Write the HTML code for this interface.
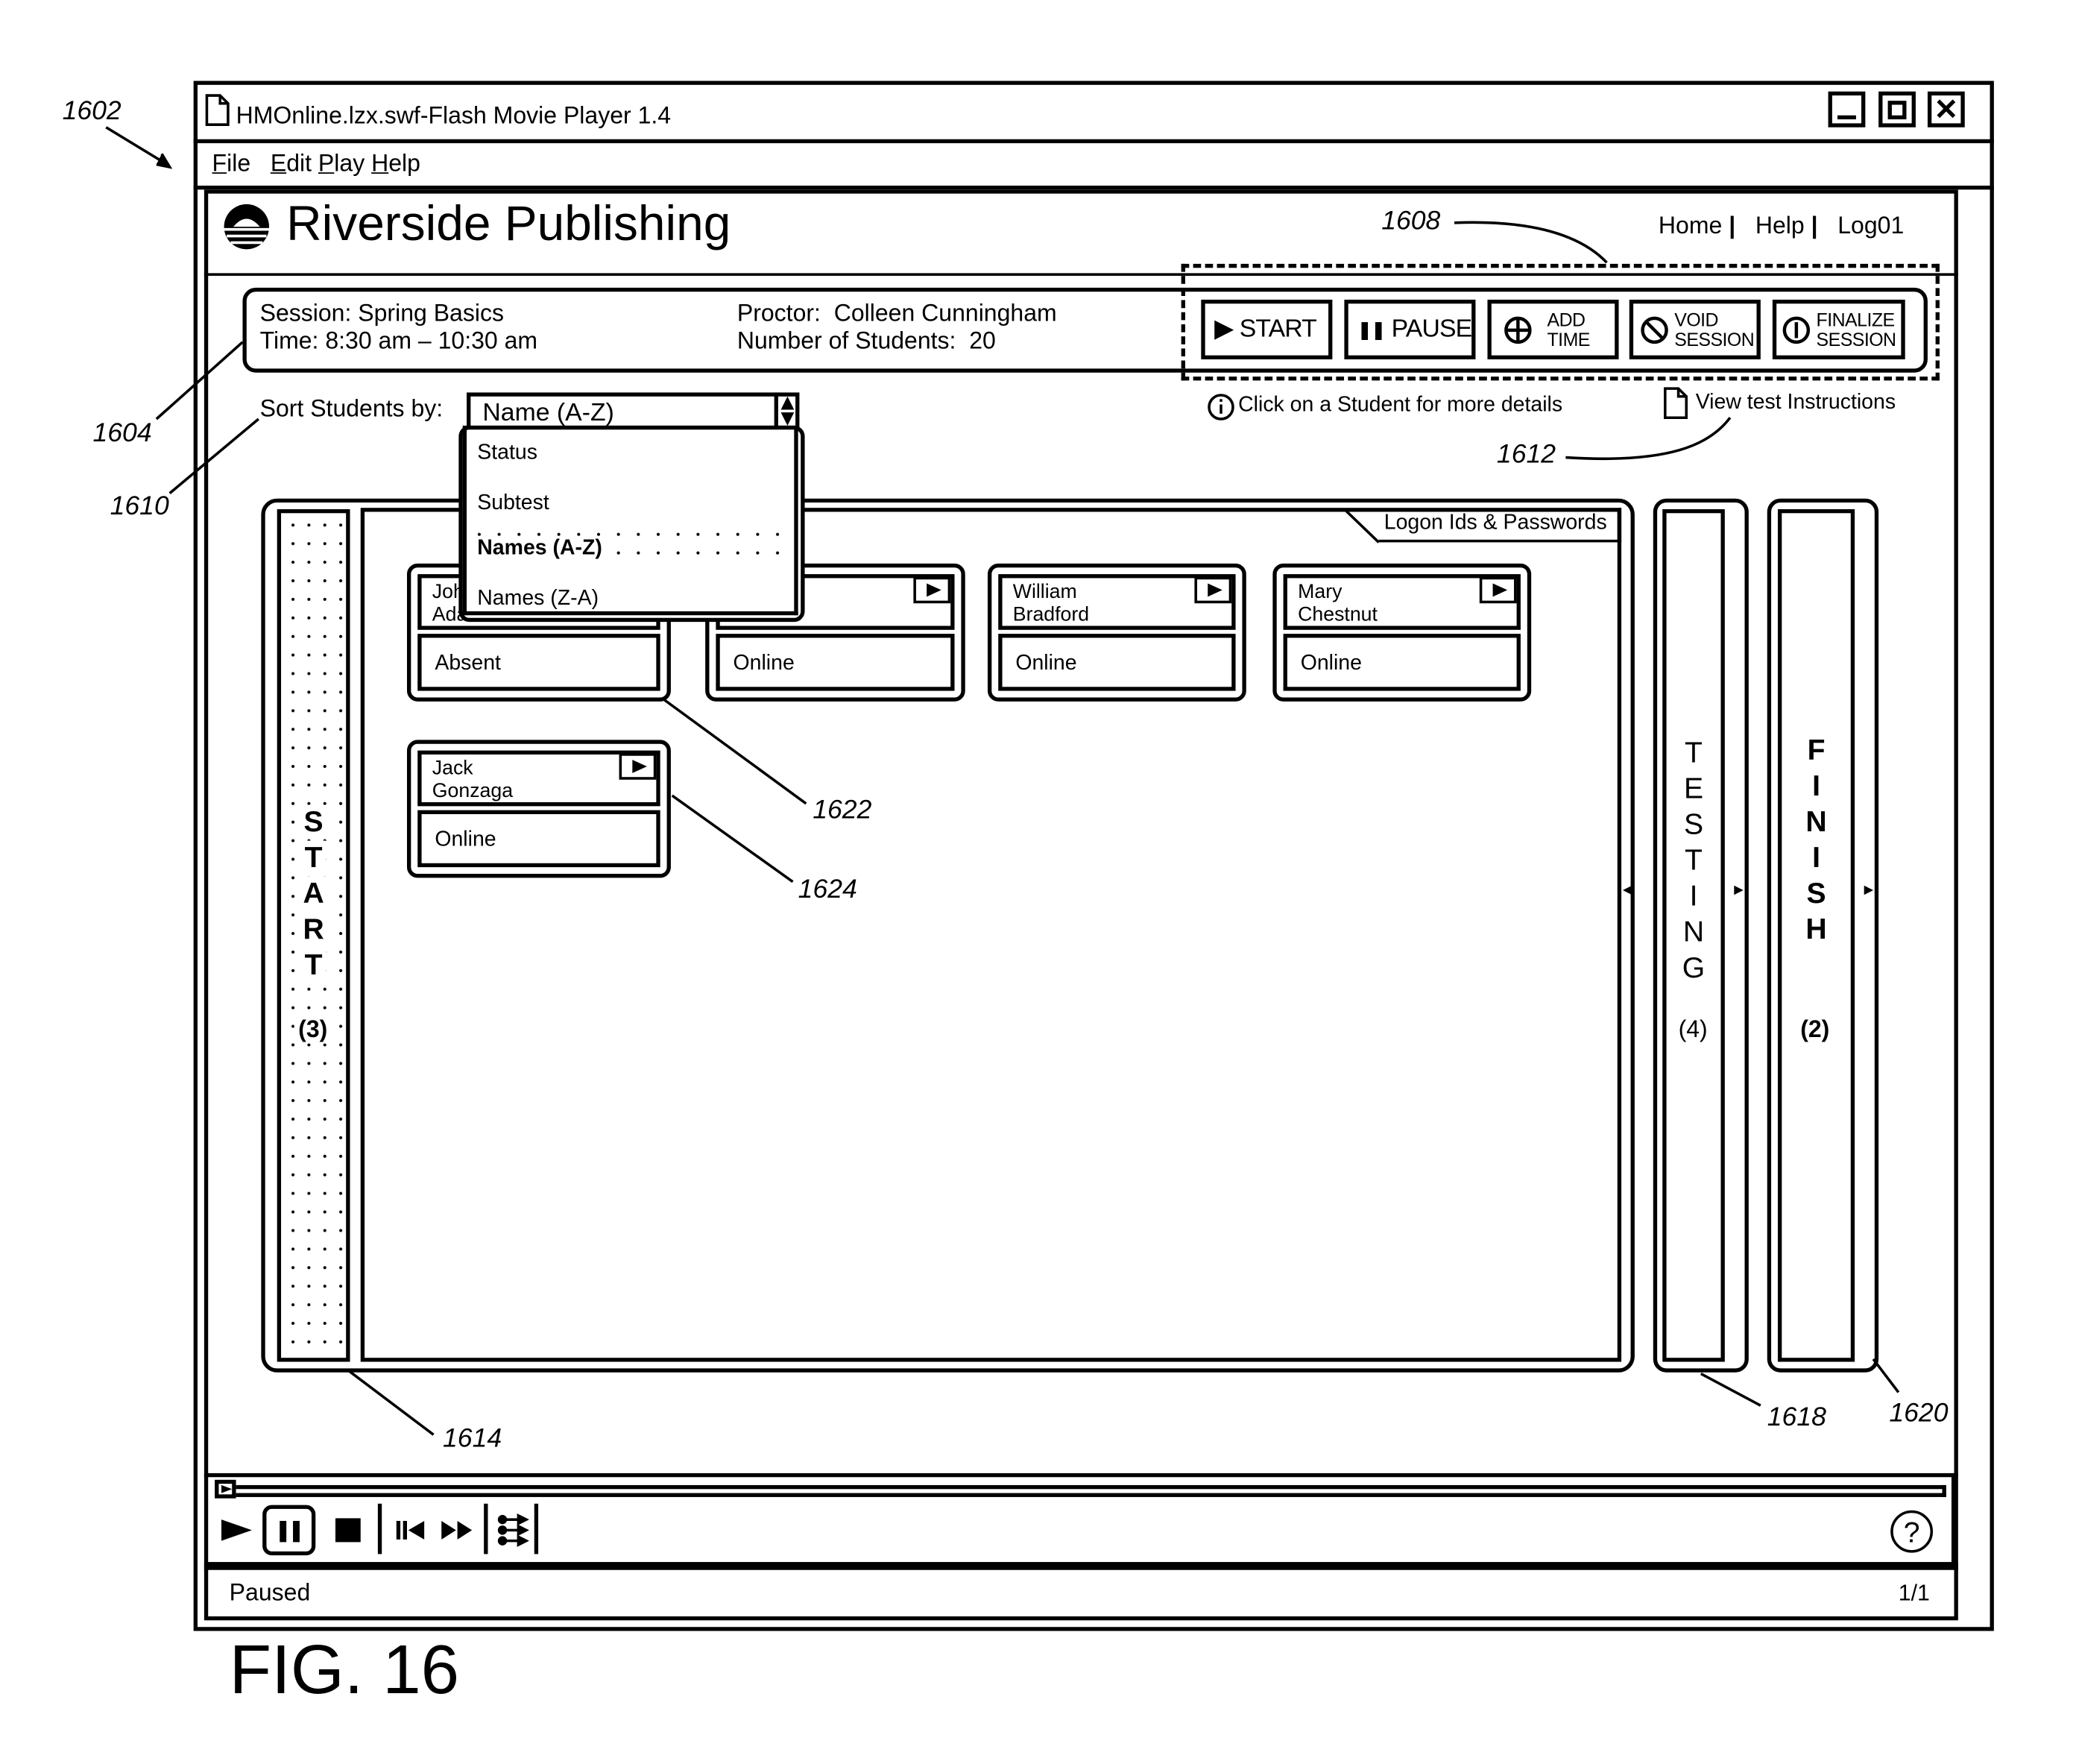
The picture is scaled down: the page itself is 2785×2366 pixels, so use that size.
<!DOCTYPE html>
<html><head><meta charset="utf-8"><style>
*{box-sizing:border-box;margin:0;padding:0}
html,body{width:2785px;height:2366px;background:#fff;overflow:hidden}
#w{position:absolute;left:0;top:0;width:1557px;height:1330px;transform:scale(1.7785);transform-origin:0 0;font-family:"Liberation Sans",Arial,sans-serif;color:#000}
.a{position:absolute}
.b{position:absolute;border:3px solid #000;background:#fff}
.t{position:absolute;white-space:nowrap}
.lbl{position:absolute;font-style:italic;font-size:20px;white-space:nowrap}
.btn{position:absolute;top:226px;height:45px;border:3px solid #000;background:#fff;font-size:19px;display:flex;align-items:center;overflow:hidden}
.btn2{position:absolute;top:226px;height:45px;border:3px solid #000;background:#fff;font-size:14px;line-height:15px;display:flex;align-items:center;overflow:hidden;letter-spacing:-0.3px}
.dots{background-image:radial-gradient(circle,#000 1px,transparent 1.3px);background-size:9px 13px}
.card{position:absolute;width:199px;height:104px;border:3px solid #000;border-radius:8px;background:#fff}
.card .n{position:absolute;left:5px;top:5px;right:5px;height:42px;border:3px solid #000;font-size:15px;line-height:17px;padding:2px 0 0 8px}
.card .s{position:absolute;left:5px;top:50px;right:5px;bottom:5px;border:3px solid #000;font-size:16px;padding:11px 0 0 10px}
.pl{position:absolute;right:8px;top:7px;width:28px;height:20px;border:2px solid #000}
.pl:after{content:"";position:absolute;left:8px;top:3px;border-left:11px solid #000;border-top:5px solid transparent;border-bottom:5px solid transparent}
.vt{position:absolute;text-align:center;font-size:22px;line-height:27px}
.wb{background:#fff;padding:0 3px}
</style></head><body><div id="w">

<!-- outer window -->
<div class="b" style="left:146px;top:61px;width:1358px;height:1169px"></div>
<div class="a" style="left:146px;top:105px;width:1358px;height:3px;background:#000"></div>
<div class="a" style="left:146px;top:140px;width:1358px;height:3px;background:#000"></div>
<svg class="a" style="left:154px;top:70px" width="20" height="26"><path d="M2 2H12L18 8V24H2Z M12 2V8H18" fill="none" stroke="#000" stroke-width="2"/></svg>
<div class="t" style="left:178px;top:77px;font-size:18px">HMOnline.lzx.swf-Flash Movie Player 1.4</div>
<div class="b" style="left:1379px;top:69px;width:28px;height:27px"><div class="a" style="left:4px;bottom:3px;width:14px;height:3px;background:#000"></div></div>
<div class="b" style="left:1417px;top:69px;width:28px;height:27px"><div class="a" style="left:4px;top:4px;width:14px;height:14px;border:3px solid #000"></div></div>
<div class="b" style="left:1454px;top:69px;width:28px;height:27px;font-size:22px;font-weight:bold;line-height:21px;text-align:center">✕</div>
<div class="t" style="left:160px;top:113px;font-size:18px"><u>F</u>ile &nbsp;&nbsp;<u>E</u>dit <u>P</u>lay <u>H</u>elp</div>

<!-- inner app -->
<div class="b" style="left:154px;top:143px;width:1323px;height:1079px"></div>
<div class="a" style="left:154px;top:206px;width:1323px;height:2px;background:#000"></div>
<svg class="a" style="left:166px;top:151px" width="40" height="40"><circle cx="20" cy="20" r="17" fill="#000"/><path d="M3 22H37M5 27H35M8 32H32" stroke="#fff" stroke-width="2"/><path d="M10 20Q20 8 30 20" fill="#fff"/></svg>
<div class="t" style="left:216px;top:148px;font-size:37px">Riverside Publishing</div>
<div class="t" style="left:1251px;top:160px;font-size:18px">Home <b>|</b> &nbsp; Help <b>|</b> &nbsp; Log01</div>

<!-- session box -->
<div class="b" style="left:183px;top:217px;width:1271px;height:64px;border-radius:10px"></div>
<div class="t" style="left:196px;top:226px;font-size:18px;line-height:21px">Session: Spring Basics<br>Time: 8:30 am – 10:30 am</div>
<div class="t" style="left:556px;top:226px;font-size:18px;line-height:21px">Proctor:&nbsp; Colleen Cunningham<br>Number of Students:&nbsp; 20</div>
<div class="a" style="left:891px;top:199px;width:572px;height:88px;border:3px dashed #000"></div>
<div class="btn" style="left:906px;width:99px;padding-left:7px;letter-spacing:-0.5px">▶&nbsp;START</div>
<div class="btn" style="left:1014px;width:99px;padding-left:7px;letter-spacing:-0.5px"><b style="font-size:13px">❚❚</b>&nbsp;PAUSE</div>
<div class="btn2" style="left:1122px;width:99px;padding-left:8px"><svg width="24" height="24" style="margin-right:10px"><circle cx="12" cy="12" r="9" fill="none" stroke="#000" stroke-width="2.5"/><path d="M12 4V20M4 12H20" stroke="#000" stroke-width="2.5"/></svg><span>ADD<br>TIME</span></div>
<div class="btn2" style="left:1229px;width:99px;padding-left:5px"><svg width="22" height="22" style="margin-right:4px"><circle cx="11" cy="11" r="9" fill="none" stroke="#000" stroke-width="2.5"/><path d="M5 5L17 17" stroke="#000" stroke-width="2.5"/></svg><span>VOID<br>SESSION</span></div>
<div class="btn2" style="left:1337px;width:100px;padding-left:4px"><svg width="22" height="22" style="margin-right:4px"><circle cx="11" cy="11" r="9" fill="none" stroke="#000" stroke-width="2.5"/><path d="M11 5V17" stroke="#000" stroke-width="2.5"/></svg><span>FINALIZE<br>SESSION</span></div>

<svg class="a" style="left:910px;top:296px" width="22" height="22"><circle cx="11" cy="11" r="9" fill="none" stroke="#000" stroke-width="2"/><path d="M11 9V16M11 5V7" stroke="#000" stroke-width="2"/></svg>
<div class="t" style="left:934px;top:297px;font-size:16px">Click on a Student for more details</div>
<svg class="a" style="left:1254px;top:291px" width="20" height="26"><path d="M2 2H12L18 8V24H2Z M12 2V8H18" fill="none" stroke="#000" stroke-width="2"/></svg>
<div class="t" style="left:1279px;top:295px;font-size:16px">View test Instructions</div>

<!-- sort -->
<div class="t" style="left:196px;top:298px;font-size:18px">Sort Students by:</div>
<div class="b" style="left:352px;top:296px;width:251px;height:28px;font-size:19px;padding:2px 0 0 9px">Name (A-Z)</div>
<div class="a" style="left:584px;top:296px;width:3px;height:28px;background:#000"></div>
<svg class="a" style="left:587px;top:298px" width="14" height="24"><path d="M7 1L12 11H2Z M2 13H12L7 23Z" fill="#000"/></svg>

<!-- big panel -->
<div class="b" style="left:197px;top:376px;width:1036px;height:659px;border-radius:12px"></div>
<div class="b dots" style="left:209px;top:384px;width:55px;height:643px;background-size:12px 14px;background-position:3px 2px"></div>
<div class="vt" style="left:212px;top:606px;width:49px;font-weight:bold"><span class="wb">S</span><br><span class="wb">T</span><br><span class="wb">A</span><br><span class="wb">R</span><br><span class="wb">T</span></div>
<div class="t wb" style="left:222px;top:766px;font-size:18px;font-weight:bold">(3)</div>
<div class="b" style="left:272px;top:383px;width:951px;height:644px"></div>
<div class="a" style="left:1040px;top:383px;width:183px;height:26px;border-bottom:2px solid #000;border-right:3px solid #000"></div>
<svg class="a" style="left:1014px;top:383px" width="30" height="27"><path d="M0 1L26 26" stroke="#000" stroke-width="2"/></svg>
<div class="t" style="left:1044px;top:386px;font-size:16px">Logon Ids &amp; Passwords</div>

<div class="card" style="left:307px;top:425px"><div class="n">John<br>Adams</div><div class="pl"></div><div class="s">Absent</div></div>
<div class="card" style="left:532px;top:425px;width:196px"><div class="n"></div><div class="pl"></div><div class="s">Online</div></div>
<div class="card" style="left:745px;top:425px;width:195px"><div class="n">William<br>Bradford</div><div class="pl"></div><div class="s">Online</div></div>
<div class="card" style="left:960px;top:425px;width:195px"><div class="n">Mary<br>Chestnut</div><div class="pl"></div><div class="s">Online</div></div>
<div class="card" style="left:307px;top:558px"><div class="n">Jack<br>Gonzaga</div><div class="pl"></div><div class="s">Online</div></div>

<!-- dropdown -->
<div class="b" style="left:346px;top:321px;width:261px;height:148px;border-radius:8px"></div>
<div class="a" style="left:349px;top:321px;width:253px;height:143px;border:3px solid #000;border-top:none"></div>
<div class="t" style="left:360px;top:333px;font-size:16px">Status</div>
<div class="t" style="left:360px;top:371px;font-size:16px">Subtest</div>
<div class="a dots" style="left:354px;top:396px;width:246px;height:28px;background-size:15px 14px"></div>
<div class="t" style="left:358px;top:405px;font-size:16px;font-weight:bold;background:#fff;padding:0 3px 0 2px">Names (A-Z)</div>
<div class="t" style="left:360px;top:443px;font-size:16px">Names (Z-A)</div>

<!-- testing / finish -->
<div class="b" style="left:1247px;top:376px;width:72px;height:659px;border-radius:10px"></div>
<div class="b" style="left:1254px;top:384px;width:47px;height:643px"></div>
<div class="vt" style="left:1254px;top:554px;width:47px">T<br>E<br>S<br>T<br>I<br>N<br>G</div>
<div class="t" style="left:1266px;top:766px;font-size:18px">(4)</div>
<div class="b" style="left:1333px;top:376px;width:84px;height:659px;border-radius:10px"></div>
<div class="b" style="left:1341px;top:384px;width:58px;height:643px"></div>
<div class="vt" style="left:1341px;top:552px;width:58px;font-weight:bold">F<br>I<br>N<br>I<br>S<br>H</div>
<div class="t" style="left:1358px;top:766px;font-size:18px;font-weight:bold">(2)</div>
<div class="t" style="left:1224px;top:662px;font-size:14px">◂</div>
<div class="t" style="left:1308px;top:662px;font-size:14px">▸</div>
<div class="t" style="left:1406px;top:662px;font-size:14px">▸</div>

<!-- player -->
<div class="a" style="left:154px;top:1111px;width:1323px;height:3px;background:#000"></div>
<div class="a" style="left:178px;top:1120px;width:1290px;height:9px;border:3px solid #000;border-left:none"></div>
<div class="b" style="left:162px;top:1116px;width:16px;height:14px"><div class="a" style="left:2px;top:1px;border-left:8px solid #000;border-top:3px solid transparent;border-bottom:3px solid transparent"></div></div>
<div class="a" style="left:1472px;top:1111px;width:3px;height:70px;background:#000"></div>
<div class="a" style="left:154px;top:1178px;width:1323px;height:6px;background:#000"></div>
<div class="a" style="left:167px;top:1146px;border-left:23px solid #000;border-top:8px solid transparent;border-bottom:8px solid transparent"></div>
<div class="b" style="left:198px;top:1135px;width:40px;height:38px;border-radius:7px"><div class="a" style="left:10px;top:9px;width:5px;height:16px;background:#000"></div><div class="a" style="left:20px;top:9px;width:5px;height:16px;background:#000"></div></div>
<div class="a" style="left:253px;top:1145px;width:19px;height:18px;background:#000"></div>
<div class="a" style="left:285px;top:1134px;width:3px;height:38px;background:#000"></div>
<div class="a" style="left:299px;top:1147px;width:3px;height:14px;background:#000"></div>
<div class="a" style="left:304px;top:1147px;width:3px;height:14px;background:#000"></div>
<div class="a" style="left:308px;top:1147px;border-right:12px solid #000;border-top:7px solid transparent;border-bottom:7px solid transparent"></div>
<div class="a" style="left:333px;top:1147px;border-left:11px solid #000;border-top:7px solid transparent;border-bottom:7px solid transparent"></div>
<div class="a" style="left:345px;top:1147px;border-left:11px solid #000;border-top:7px solid transparent;border-bottom:7px solid transparent"></div>
<div class="a" style="left:365px;top:1134px;width:3px;height:38px;background:#000"></div>
<svg class="a" style="left:375px;top:1141px" width="24" height="26"><g fill="#000" stroke="#000" stroke-width="2"><circle cx="4" cy="5" r="2.5"/><circle cx="4" cy="13" r="2.5"/><circle cx="4" cy="21" r="2.5"/><path d="M4 5H18M4 13H18M4 21H18"/><path d="M16 2L22 5L16 8ZM16 10L22 13L16 16ZM16 18L22 21L16 24Z"/></g></svg>
<div class="a" style="left:403px;top:1134px;width:3px;height:38px;background:#000"></div>
<svg class="a" style="left:1425px;top:1138px" width="34" height="34"><circle cx="17" cy="17" r="15" fill="none" stroke="#000" stroke-width="2"/><text x="17" y="25" font-size="22" text-anchor="middle" font-family="Liberation Sans">?</text></svg>
<div class="t" style="left:173px;top:1191px;font-size:18px">Paused</div>
<div class="t" style="left:1432px;top:1192px;font-size:17px">1/1</div>

<div class="t" style="left:173px;top:1230px;font-size:52px">FIG. 16</div>

<!-- callouts -->
<div class="lbl" style="left:47px;top:73px">1602</div>
<div class="lbl" style="left:1042px;top:156px">1608</div>
<div class="lbl" style="left:70px;top:316px">1604</div>
<div class="lbl" style="left:83px;top:371px">1610</div>
<div class="lbl" style="left:1129px;top:332px">1612</div>
<div class="lbl" style="left:613px;top:600px">1622</div>
<div class="lbl" style="left:602px;top:660px">1624</div>
<div class="lbl" style="left:334px;top:1074px">1614</div>
<div class="lbl" style="left:1333px;top:1058px">1618</div>
<div class="lbl" style="left:1425px;top:1055px">1620</div>
<svg class="a" style="left:0;top:0" width="1557" height="1323"><g fill="none" stroke="#000" stroke-width="2">
<path d="M80 96L126 124"/><path d="M118 124L128 126L122 116" fill="#000"/>
<path d="M1097 168C1150 166 1190 175 1212 198"/>
<path d="M118 316L183 258"/>
<path d="M128 372L195 316"/>
<path d="M1181 345C1260 350 1290 335 1305 315"/>
<path d="M500 527L608 606"/>
<path d="M507 600L598 665"/>
<path d="M262 1033L327 1082"/>
<path d="M1283 1036L1328 1060"/>
<path d="M1413 1025L1432 1050"/>
</g></svg>
</div></body></html>
